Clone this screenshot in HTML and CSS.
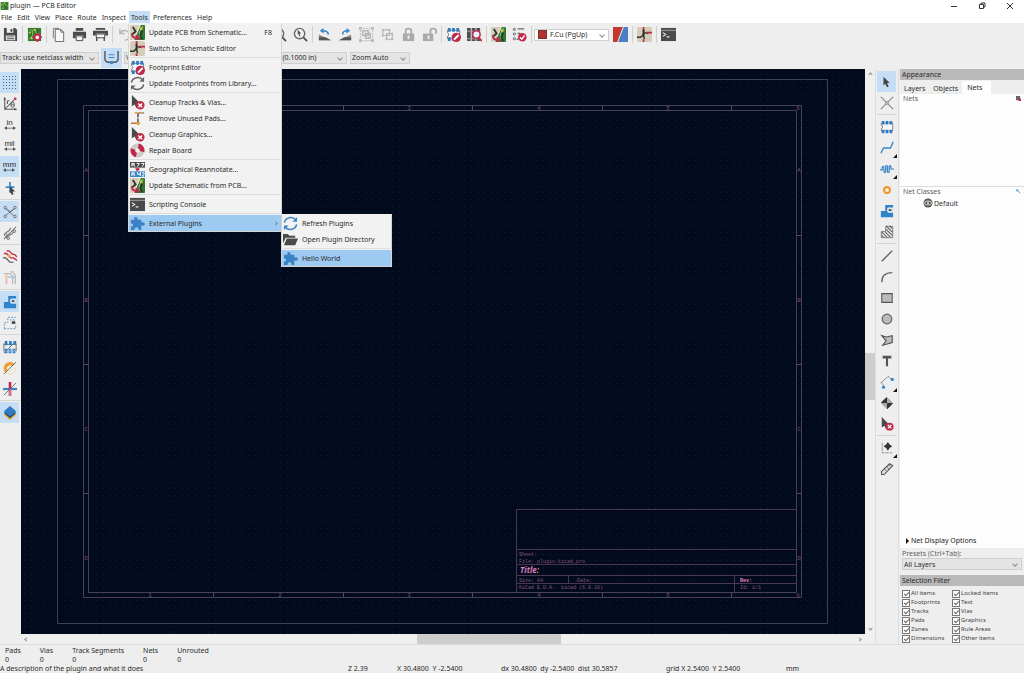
FILE: index.html
```html
<!DOCTYPE html>
<html lang="en">
<head>
<meta charset="utf-8">
<title>plugin — PCB Editor</title>
<link rel="stylesheet" href="styles.css">
</head>
<body>
<svg class="defs" aria-hidden="true">
  <symbol id="save" viewBox="0 0 16 16"><path fill="#4a4a4a" d="M1 1h12l2 2v12H1z"/><path fill="#eee" d="M4 1h7v5H4zM3 9h10v5H3z"/><path fill="#4a4a4a" d="M8 2h2v3H8zM4 10h8v1H4zM4 12h8v1H4z"/></symbol>
  <symbol id="board" viewBox="0 0 16 16"><path fill="#2f7a33" d="M1 1h14v14H1z"/><path stroke="#8bc34a" fill="none" d="M2 13l4-4V3M9 2v4l5 2M4 2v3"/><path fill="#e8c14e" d="M2 5h2v2H2zM7 2h2v2H7zM4 11h2v2H4z"/></symbol>
  <symbol id="setup" viewBox="0 0 16 16"><use href="#board"/><circle cx="11" cy="11" r="3" fill="#eee" stroke="#c0294a" stroke-width="2"/><path stroke="#c0294a" stroke-width="1.5" d="M11 6v2M11 14v2M6 11h2M14 11h2M8 8l1 1M13 13l1 1M14 8l-1 1M8 14l1-1"/></symbol>
  <symbol id="page" viewBox="0 0 16 16"><path fill="#e8e8e8" stroke="#777" d="M2.500 3V1.500h6M2.500 3v9"/><path fill="#f8f8f8" stroke="#666" d="M4.500 2.500h6l3 3v10h-9zM10.500 2.500v3h3"/></symbol>
  <symbol id="print" viewBox="0 0 16 16"><path fill="#4a4a4a" d="M4 1h8v3H4zM1 5h14v7h-3V9H4v3H1z"/><path fill="#f4f4f4" stroke="#4a4a4a" d="M4.500 9.500h7v5h-7z"/></symbol>
  <symbol id="plot" viewBox="0 0 16 16"><path fill="#4a4a4a" d="M3 1h10v2H3zM0 4h16v5h-3V7H3v2H0z"/><path fill="#f4f4f4" stroke="#4a4a4a" d="M3.500 7.500h9v4h-9z"/><path stroke="#4a4a4a" stroke-width="1.500" d="M4 11v4M12 11v4"/></symbol>
  <symbol id="undo" viewBox="0 0 16 16"><path fill="none" stroke="#b8b8b8" stroke-width="1.500" d="M3 2v5h5M3 7c3-5 10-4 10 2 0 3-2 5-5 5"/></symbol>
  <symbol id="mag" viewBox="0 0 16 16"><circle cx="7" cy="7" r="5.500" fill="#f4f4f4" stroke="#666" stroke-width="1.500"/><path stroke="#555" stroke-width="2" d="M11 11l4 4"/></symbol>
  <symbol id="magsel" viewBox="0 0 16 16"><use href="#mag"/><path fill="#555" d="M5 3l4 4H7l1 3-1 .5-1-3-1 1z"/></symbol>
  <symbol id="rotl" viewBox="0 0 16 16"><path fill="#8b8b8b" d="M2 8l13 6H2z"/><path fill="#555" d="M2 11h7l6 3H2z"/><path fill="none" stroke="#3c86c8" stroke-width="1.800" d="M12 8c0-3-2-4-6-4"/><path fill="#3c86c8" d="M7 1v6L3 4z"/></symbol>
  <symbol id="rotr" viewBox="0 0 16 16"><path fill="#8b8b8b" d="M14 8L1 14h13z"/><path fill="#555" d="M14 11H7l-6 3h13z"/><path fill="none" stroke="#3c86c8" stroke-width="1.800" d="M5 8c0-3 1-4 5-4"/><path fill="#3c86c8" d="M9 1v6l4-3z"/></symbol>
  <symbol id="group" viewBox="0 0 16 16"><path fill="none" stroke="#b8b8b8" stroke-dasharray="2 1" d="M1.500 1.500h13v13h-13z"/><path fill="#eee" stroke="#b4b4b4" stroke-width="1.500" d="M4 4h6v5H4zM7 7h5v5H7z"/><path fill="#bbb" d="M0 0h3v3H0zM13 0h3v3h-3zM0 13h3v3H0zM13 13h3v3h-3z"/></symbol>
  <symbol id="ungroup" viewBox="0 0 16 16"><path fill="#eee" stroke="#b4b4b4" stroke-width="1.200" d="M3 3h7v6H3zM7 7h6v6H7z"/><path fill="#b4b4b4" d="M2 2h2v2H2zM9 2h2v2H9zM2 8h2v2H2zM12 6h2v2h-2zM6 12h2v2H6zM12 12h2v2h-2z"/></symbol>
  <symbol id="lock" viewBox="0 0 16 16"><path fill="none" stroke="#aaa" stroke-width="2" d="M5 8V4c0-3 6-3 6 0v4"/><path fill="#aaa" d="M2 7h12v8H2z"/><path fill="#eee" d="M7 9h2v4H7z"/></symbol>
  <symbol id="unlock" viewBox="0 0 16 16"><path fill="none" stroke="#aaa" stroke-width="2" d="M9 8V4c0-3 6-3 6 0v3"/><path fill="#aaa" d="M1 7h11v8H1z"/><path fill="#eee" d="M6 9h2v4H6z"/></symbol>
  <symbol id="fp" viewBox="0 0 16 16"><path fill="#f8f8f8" stroke="#777" d="M1.500 3.500h13v9h-13V10c2 0 2-4 0-4z"/><path fill="#2f7cc4" d="M2 1h3v4H2zM6.500 1h3v4h-3zM11 1h3v4h-3zM2 11h3v4H2zM6.500 11h3v4h-3zM11 11h3v4h-3z"/></symbol>
  <symbol id="fpedit" viewBox="0 0 16 16"><use href="#fp"/><circle cx="11" cy="11" r="5" fill="#c0294a"/><path stroke="#fff" stroke-width="2" d="M8.500 13.500l5-5"/></symbol>
  <symbol id="lib" viewBox="0 0 16 16"><path fill="#4f4f4f" d="M0 1h4v14H0zM5 1h4v14H5zM10 1h4v14h-4z"/><path stroke="#aaa" d="M0 4.500h14M0 12.500h14"/><circle cx="10" cy="8" r="4" fill="#e4eef8" stroke="#c0294a" stroke-width="1.600"/><path stroke="#c0294a" stroke-width="2" d="M12 11l4 4"/></symbol>
  <symbol id="sch" viewBox="0 0 16 16"><rect width="16" height="16" rx="2" fill="#d4cdb8"/><path stroke="#333" stroke-width="1.500" fill="none" d="M7 3v8M0 11h4l4-4M8 6l4 1M7 9l1 4"/><path stroke="#c0294a" stroke-width="1.800" d="M10 6h6M7 0v4M7 13v3"/><path fill="#333" d="M6 3h2v6H6z"/></symbol>
  <symbol id="sync" viewBox="0 0 16 16"><rect width="16" height="16" rx="1" fill="#2f7a33"/><path fill="#d4cdb8" d="M0 0h11L4 16H0z"/><path stroke="#9fd35a" fill="none" d="M14 1l-4 6v6"/><path stroke="#fff" stroke-width="1" fill="none" d="M11 0L4 16"/><path stroke="#333" stroke-width="2" fill="none" d="M3 2l3 5-4 3M13 6l-2 5 2 4"/><path stroke="#c0294a" stroke-width="2" fill="none" d="M2 9c0 4 2 5 6 5M6 11l3 3-2 2"/><circle cx="12" cy="4" r="1.500" fill="#e8c14e"/></symbol>
  <symbol id="drc" viewBox="0 0 16 16"><path fill="none" stroke="#777" d="M1.500 1.500h2v2h-2zM1.500 6.500h2v2h-2zM1.500 11.500h2v2h-2z"/><path stroke="#666" stroke-width="1.500" d="M6 2h7M6 7h3M5 13h2"/><circle cx="11" cy="11" r="4.500" fill="#c0294a"/><path fill="none" stroke="#fff" stroke-width="1.500" d="M8.500 11l2 2 3-4"/></symbol>
  <symbol id="pair" viewBox="0 0 16 16"><path fill="#c4382f" d="M0 0h11L5 16H0z"/><path fill="#4d7fc4" d="M11 0h5v16H5z"/><path stroke="#eee" d="M11 0L5 16"/></symbol>
  <symbol id="term" viewBox="0 0 16 16"><path fill="#4a4a4a" d="M0 1h16v14H0z"/><path stroke="#aaa" d="M0 3.500h16"/><path stroke="#eee" stroke-width="1.200" fill="none" d="M2 6l3 2-3 2M6 10.500h3"/></symbol>
  <symbol id="refresh" viewBox="0 0 16 16"><path fill="none" stroke="currentColor" stroke-width="1.600" d="M1.500 7c1-6 9-7 12-3M14.500 9c-1 6-9 7-12 3"/><path fill="currentColor" d="M15 1v5h-5zM1 15v-5h5z"/></symbol>
  <symbol id="cursorx" viewBox="0 0 16 16"><path fill="#4a4a4a" d="M2 0l9 9H7l2 4-2 1-2-4-3 2z"/><circle cx="11" cy="11" r="4.500" fill="#c0294a"/><path stroke="#fff" stroke-width="1.500" d="M9 9l4 4M13 9l-4 4"/></symbol>
  <symbol id="unpad" viewBox="0 0 16 16"><path stroke="#4d7fc4" stroke-width="1.500" d="M9 2h6"/><path stroke="#c0603f" stroke-width="1.500" d="M1 13h7"/><path stroke="#444" stroke-width="1.500" stroke-dasharray="5 1" d="M8.500 2v13"/><path fill="#f2a33a" d="M5 1h4v2H5zM11 1h3v2h-3zM6 12h5v2H6z"/></symbol>
  <symbol id="ring" viewBox="0 0 16 16"><circle cx="8" cy="8" r="5" fill="none" stroke="#ccc" stroke-width="5"/><circle cx="8" cy="8" r="5" fill="none" stroke="#c0294a" stroke-width="5" stroke-dasharray="8 7.700" transform="rotate(-80 8 8)"/></symbol>
  <symbol id="reann" viewBox="0 0 16 16"><path fill="#4a4a4a" d="M0 0h16v6H0z"/><path fill="#3c86c8" d="M0 10h16v6H0z"/><path stroke="#fff" fill="none" d="M2 5V1.500h2.500V3H2M4 3l1 2M7 1.500h3L8 5M12 1.500h3L13 5M2 15v-3.500h2.500V13H2M4 13l1 2M8 11v2h3v-2M11 11v4M13 11.500h2V13l-2 2h2"/><path stroke="#c0294a" stroke-width="1.500" fill="none" d="M8 6v3M6 7l2 2 2-2"/></symbol>
  <symbol id="puzzle" viewBox="0 0 16 16"><path fill="#3a82c4" d="M1 4h4C3 0 9 0 8 4h4v3c5-2 5 5 0 3v5H9c1-4-5-4-4 0H1v-4c3 1 3-4 0-3z"/></symbol>
  <symbol id="folder" viewBox="0 0 16 16"><path fill="#4a4a4a" d="M0 2h5l2 2h6v2H3L0 12zM4 7h12l-3 7H1z"/></symbol>
  <symbol id="uwidth" viewBox="0 0 16 16"><path fill="none" stroke="#555" stroke-width="1.500" d="M1 1v8c0 2 1 4 4 4h6c3 0 4-2 4-4V1"/><path stroke="#3c86c8" stroke-width="1.200" d="M5 5h6M5 8h6"/><circle cx="8" cy="13.500" r="1.800" fill="#3c86c8"/></symbol>
  <symbol id="grid" viewBox="0 0 14 14"><path stroke="#4a6384" stroke-width="1" stroke-dasharray="1 2" d="M0 .5h14M0 3.500h14M0 6.500h14M0 9.500h14M0 12.500h14"/></symbol>
  <symbol id="polar" viewBox="0 0 16 16"><path fill="none" stroke="#555" stroke-width="1.200" d="M2 1v13h13M1 3l1-2 1 2M13 13l2 1-2 1M2 14L13 3M5 4v4M5 5l2-1"/><circle cx="14" cy="2" r="1.500" fill="#c0294a"/><ellipse cx="11" cy="9" rx="2" ry="3" fill="none" stroke="#555"/><path stroke="#555" d="M9 9h4"/></symbol>
  <symbol id="arrows" viewBox="0 0 16 5"><path fill="#555" d="M0 2.500L4 0v2h8V0l4 2.500L12 5V3H4v2z"/></symbol>
  <symbol id="cross" viewBox="0 0 16 16"><path stroke="#3c86c8" stroke-width="2" d="M8 1v12M3 7h10"/><path fill="#444" d="M8 6l6 6h-3l1 3-2 1-1-3-1 1z"/></symbol>
  <symbol id="rats" viewBox="0 0 16 16"><path stroke="#666" fill="none" d="M2 3l12 11M14 3L2 13M2 3l7 5 5-5"/><g fill="#ddd" stroke="#666"><circle cx="2.500" cy="3" r="1.500"/><circle cx="13.500" cy="3" r="1.500"/><circle cx="2.500" cy="13" r="1.500"/><circle cx="13.500" cy="13" r="1.500"/></g></symbol>
  <symbol id="curv" viewBox="0 0 16 16"><path stroke="#777" stroke-width="1.200" fill="none" d="M2 10c0-4 5-2 7-8M4 14c1-5 7-2 9-9M1 15L15 1"/><g fill="#ddd" stroke="#666"><circle cx="3" cy="10" r="1.500"/><circle cx="13" cy="6" r="1.500"/><circle cx="6" cy="14" r="1.500"/></g></symbol>
  <symbol id="tracks" viewBox="0 0 16 16"><path fill="none" stroke="#c0294a" stroke-width="1.600" d="M4 1h3l4 4h2l3 3M1 4h3l5 5h3l4 3"/><path fill="none" stroke="#555" stroke-width="1.400" d="M0 9h3l5 5h4"/><circle cx="7" cy="7" r="1.800" fill="#f2a33a"/></symbol>
  <symbol id="netc" viewBox="0 0 16 16"><path fill="none" stroke="#bbb" stroke-width="1.500" d="M1 3h7l3 3v9M8 1h3l3 4v10"/><path stroke="#9cc3e4" stroke-width="1.500" d="M3 7h12"/><path stroke="#ecb5bd" stroke-width="2" d="M4 8v7"/><circle cx="4" cy="6" r="2" fill="#f3d09a"/></symbol>
  <symbol id="zone" viewBox="0 0 16 16"><path fill="#2f84cc" d="M1 8h5V1h9v3H9v6h6v5H1z"/><path fill="#d9e6f2" d="M8 5h7v4H8z"/><path fill="#444" d="M10 6h3v2h-3z"/></symbol>
  <symbol id="zoneo" viewBox="0 0 16 16"><path fill="none" stroke="#4d8cc4" stroke-dasharray="2 1.500" d="M1.500 14.500V7.500h4V1.500h9M1.500 14.500h13v-5M8 4.500h7"/><path fill="#444" d="M10 6h4v3h-4z"/></symbol>
  <symbol id="padsk" viewBox="0 0 16 16"><path fill="none" stroke="#666" d="M1 4v9M15 4v9M1 15L15 1M1 5h14"/><path fill="#2f7cc4" d="M2 1h3v5H2zM7 1h3v5H7zM12 1h3v4h-3z"/><path fill="none" stroke="#2f7cc4" stroke-width="1.200" d="M2.500 10.500h2v4h-2zM7 10.500h2v4H7zM11.500 10.500h2v4h-2z"/></symbol>
  <symbol id="viask" viewBox="0 0 16 16"><path fill="none" stroke="#f0a030" stroke-width="4" d="M4 12a5 5 0 0 1 8-7"/><path fill="none" stroke="#ecd6ac" d="M14 7a6 6 0 0 1-9 7M10 8a3 3 0 0 1-2 3"/><path stroke="#666" d="M1 15L15 1"/></symbol>
  <symbol id="trsk" viewBox="0 0 16 16"><path stroke="#3c86c8" stroke-width="2.500" d="M0 8h16"/><path stroke="#c0294a" stroke-width="3" d="M8 0v16"/><path stroke="#ddd" d="M8 8v8"/><path stroke="#666" d="M1 15L15 1"/></symbol>
  <symbol id="layers" viewBox="0 0 16 16"><path fill="#f0a030" d="M1 10l7-6 7 6-7 6z"/><path fill="#174f85" d="M1 8l7-6 7 6-7 6z"/><path fill="#2f7cc4" d="M1 6l7-6 7 6-7 6z"/></symbol>
  <symbol id="arrow" viewBox="0 0 16 16"><path fill="#444" d="M4 2l7 7H8l2 4-2 1-2-4-2 2z"/></symbol>
  <symbol id="hl" viewBox="0 0 16 16"><path stroke="#888" stroke-width="1.300" d="M1 1l14 14M15 1L1 15"/><circle cx="8" cy="8" r="1.500" fill="#ddd" stroke="#888"/></symbol>
  <symbol id="route" viewBox="0 0 16 16"><path fill="none" stroke="#3c86c8" stroke-width="1.500" d="M1 14l3-6h8l3-7"/></symbol>
  <symbol id="tune" viewBox="0 0 16 16"><path fill="none" stroke="#3c86c8" stroke-width="1.400" d="M0 9h2.500V6q1-2 2 0v5q1 2 2 0V5q1-2 2 0v6q1 2 2 0V5q1-2 2 0v3H16"/></symbol>
  <symbol id="via" viewBox="0 0 16 16"><circle cx="8" cy="8" r="3.400" fill="#fff" stroke="#ee9a2f" stroke-width="2.600"/></symbol>
  <symbol id="hatch" viewBox="0 0 16 16"><path fill="#e6e6e6" stroke="#777" d="M1.500 7.500h5v-6h8v13h-13z"/><path stroke="#555" stroke-width="1.200" d="M2 8l6 6M2 12l2 2M6 8l6 6M7 5l7 7M7 1l7 7M11 1l3 3"/></symbol>
  <symbol id="line" viewBox="0 0 16 16"><path stroke="#666" stroke-width="1.600" d="M2 14L14 2"/></symbol>
  <symbol id="arc" viewBox="0 0 16 16"><path fill="none" stroke="#666" stroke-width="1.500" d="M2 14C2 7 6 3 14 3"/></symbol>
  <symbol id="rect" viewBox="0 0 16 16"><path fill="#bbb" stroke="#555" stroke-width="1.200" d="M2 3h12v10H2z"/></symbol>
  <symbol id="circ" viewBox="0 0 16 16"><circle cx="8" cy="8" r="5.500" fill="#bbb" stroke="#666" stroke-width="1.400"/></symbol>
  <symbol id="poly" viewBox="0 0 16 16"><path fill="#bbb" stroke="#555" stroke-width="1.300" d="M2 3l5 1.500L14 3v8L3 14l4-5z"/></symbol>
  <symbol id="txt" viewBox="0 0 16 16"><path fill="#555" d="M3 2h10v3H9.200v9H6.800V5H3z"/></symbol>
  <symbol id="dim" viewBox="0 0 16 16"><path fill="none" stroke="#888" d="M1 9l8-7M1 8l4 5M9 1l4 4"/><circle cx="4" cy="14" r="1.800" fill="#2f84cc"/><circle cx="14" cy="5" r="1.800" fill="#2f84cc"/></symbol>
  <symbol id="target" viewBox="0 0 16 16"><path fill="#aaa" d="M8 1l7 7-7 7-7-7z"/><circle cx="8" cy="8" r="5" fill="#aaa"/><path fill="#333" d="M8 1v7H1l3-3.500zM8 15V8h7l-3 3.500z"/></symbol>
  <symbol id="origin" viewBox="0 0 16 16"><path fill="none" stroke="#888" d="M2.500 2v11.500H14" stroke-dasharray="4 1"/><path fill="#333" d="M9 1l2 3 3 2-3 2-2 3-2-3-3-2 3-2z"/></symbol>
  <symbol id="ruler" viewBox="0 0 16 16"><path fill="#ddd" stroke="#555" stroke-width="1.200" d="M1.500 11L11 2l3.500 2L5 14l-3 .5z"/><path stroke="#555" d="M5 8l2 2M8 6l2 2M10 3l2 2"/></symbol>
</svg>

<header class="titlebar">
  <svg class="appicon"><use href="#board"/></svg>
  <h1>plugin — PCB Editor</h1>
  <div class="winbtns">
    <button aria-label="Minimize"><svg viewBox="0 0 8 8"><path d="M1 4.500h6"/></svg></button>
    <button aria-label="Restore"><svg viewBox="0 0 8 8"><path d="M1.500 2.500h4v4h-4zM3 2V1h4v4H6"/></svg></button>
    <button aria-label="Close"><svg viewBox="0 0 8 8"><path d="M1 1l6 6M7 1L1 7"/></svg></button>
  </div>
</header>

<nav class="menubar">
  <button>File</button><button>Edit</button><button>View</button><button>Place</button><button>Route</button><button>Inspect</button>
  <div class="menuhost">
    <button class="open">Tools</button>
    <div class="menu tools">
      <button><svg><use href="#sync"/></svg>Update PCB from Schematic...<kbd>F8</kbd></button>
      <button><svg><use href="#sch"/></svg>Switch to Schematic Editor</button>
      <hr>
      <button><svg><use href="#fpedit"/></svg>Footprint Editor</button>
      <button><svg><use href="#refresh"/></svg>Update Footprints from Library...</button>
      <hr>
      <button><svg><use href="#cursorx"/></svg>Cleanup Tracks &amp; Vias...</button>
      <button><svg><use href="#unpad"/></svg>Remove Unused Pads...</button>
      <button><svg><use href="#cursorx"/></svg>Cleanup Graphics...</button>
      <button><svg><use href="#ring"/></svg>Repair Board</button>
      <hr>
      <button><svg><use href="#reann"/></svg>Geographical Reannotate...</button>
      <button><svg><use href="#sync"/></svg>Update Schematic from PCB...</button>
      <hr>
      <button><svg><use href="#term"/></svg>Scripting Console</button>
      <hr>
      <div class="subhost">
        <button class="hot"><svg><use href="#puzzle"/></svg>External Plugins<i class="chev right"></i></button>
        <div class="menu sub">
          <button><svg class="blue"><use href="#refresh"/></svg>Refresh Plugins</button>
          <button><svg><use href="#folder"/></svg>Open Plugin Directory</button>
          <hr>
          <button class="hot"><svg><use href="#puzzle"/></svg>Hello World</button>
        </div>
      </div>
    </div>
  </div>
  <button>Preferences</button><button>Help</button>
</nav>

<div class="toolbar">
  <button aria-label="Save"><svg><use href="#save"/></svg></button><span class="vsep"></span>
  <button aria-label="Board setup"><svg><use href="#setup"/></svg></button><span class="vsep"></span>
  <button aria-label="Page settings"><svg><use href="#page"/></svg></button>
  <button aria-label="Print"><svg><use href="#print"/></svg></button>
  <button aria-label="Plot"><svg><use href="#plot"/></svg></button><span class="vsep"></span>
  <button aria-label="Undo"><svg><use href="#undo"/></svg></button>
  <span class="covered"></span>
  <button aria-label="Zoom to fit"><svg><use href="#mag"/></svg></button>
  <button aria-label="Zoom to selection"><svg><use href="#magsel"/></svg></button><span class="vsep"></span>
  <button aria-label="Rotate left"><svg><use href="#rotl"/></svg></button>
  <button aria-label="Rotate right"><svg><use href="#rotr"/></svg></button>
  <button aria-label="Group"><svg><use href="#group"/></svg></button>
  <button aria-label="Ungroup"><svg><use href="#ungroup"/></svg></button>
  <button aria-label="Lock"><svg><use href="#lock"/></svg></button>
  <button aria-label="Unlock"><svg><use href="#unlock"/></svg></button><span class="vsep"></span>
  <button aria-label="Footprint editor"><svg><use href="#fpedit"/></svg></button>
  <button aria-label="Footprint browser"><svg><use href="#lib"/></svg></button><span class="vsep"></span>
  <button aria-label="Update PCB"><svg><use href="#sync"/></svg></button>
  <button aria-label="Design rules check"><svg><use href="#drc"/></svg></button><span class="vsep"></span>
  <span class="combo layer"><i class="swatch"></i><select aria-label="Active layer"><option>F.Cu (PgUp)</option></select></span>
  <button aria-label="Layer pair"><svg><use href="#pair"/></svg></button><span class="vsep"></span>
  <button aria-label="Schematic editor"><svg><use href="#sch"/></svg></button><span class="vsep"></span>
  <button aria-label="Scripting console"><svg><use href="#term"/></svg></button>
</div>

<div class="toolbar second">
  <span class="combo track"><select aria-label="Track width"><option>Track: use netclass width</option></select></span>
  <button class="on" aria-label="Auto track width"><svg><use href="#uwidth"/></svg></button>
  <span class="combo viasize"><select aria-label="Via size"><option>Via: use netclass sizes</option></select></span>
  <span class="combo gridsize"><select aria-label="Grid"><option>Grid: 2.5400 mm (0.1000 in)</option></select></span>
  <span class="combo zoom"><select aria-label="Zoom"><option>Zoom Auto</option></select></span>
</div>

<main>
  <aside class="rail">
    <button class="on" aria-label="Show grid"><svg><use href="#grid"/></svg></button>
    <button aria-label="Polar coordinates"><svg><use href="#polar"/></svg></button>
    <button class="unit">in<svg><use href="#arrows"/></svg></button>
    <button class="unit">mil<svg><use href="#arrows"/></svg></button>
    <button class="unit on">mm<svg><use href="#arrows"/></svg></button>
    <button aria-label="Full crosshair"><svg><use href="#cross"/></svg></button><hr>
    <button class="on" aria-label="Show ratsnest"><svg><use href="#rats"/></svg></button>
    <button aria-label="Curved ratsnest"><svg><use href="#curv"/></svg></button><hr>
    <button aria-label="Dim inactive layers"><svg><use href="#tracks"/></svg></button>
    <button aria-label="Net highlight"><svg><use href="#netc"/></svg></button><hr>
    <button class="on" aria-label="Filled zones"><svg><use href="#zone"/></svg></button>
    <button aria-label="Zone outlines"><svg><use href="#zoneo"/></svg></button><hr>
    <button aria-label="Sketch pads"><svg><use href="#padsk"/></svg></button>
    <button aria-label="Sketch vias"><svg><use href="#viask"/></svg></button>
    <button aria-label="Sketch tracks"><svg><use href="#trsk"/></svg></button><hr>
    <button class="on" aria-label="Appearance manager"><svg><use href="#layers"/></svg></button>
  </aside>

  <section class="board">
    <svg class="sheet" viewBox="21 69 844 565">
      <defs>
        <pattern id="dots" x="24" y="71" width="46" height="46" patternUnits="userSpaceOnUse">
          <path stroke="#151a30" stroke-dasharray="1 6 1 5 1 6 1 5 1 6 1 6 1 5" d="M0 3.500h46M0 10.500h46M0 16.500h46M0 23.500h46M0 29.500h46M0 36.500h46M0 43.500h46"/>
        </pattern>
      </defs>
      <rect x="21" y="69" width="844" height="565" fill="url(#dots)"/>
      <g fill="none" stroke="#413f58">
        <path d="M57.500 79.500h770v544h-770z"/>
        <path stroke="#484059" d="M83.500 105.500h718v492h-718zM88.500 110.500h708v482h-708z"/>
        <path stroke="#5a4462" d="M213.500 105v5M343.500 105v5M472.500 105v5M602.500 105v5M731.500 105v5M213.500 592v5M343.500 592v5M472.500 592v5M602.500 592v5M731.500 592v5M83 235.500h5M83 364.500h5M83 493.500h5M797 235.500h5M797 364.500h5M797 493.500h5"/>
        <path stroke="#4b3654" d="M516.500 592V509.500h280M516.500 549.500h280M516.500 564.500h280M516.500 575.500h280M516.500 583.500h280M568.500 575v8M734.500 575v17"/>
      </g>
      <g class="ref">
        <text x="409" y="110">3</text><text x="539" y="110">4</text><text x="668" y="110">5</text><text x="798" y="110">6</text>
        <text x="150" y="597">1</text><text x="280" y="597">2</text><text x="409" y="597">3</text><text x="539" y="597">4</text><text x="668" y="597">5</text><text x="798" y="597">6</text>
        <text x="86" y="172">A</text><text x="86" y="302">B</text><text x="86" y="431">C</text><text x="86" y="560">D</text>
        <text x="799" y="172">A</text><text x="799" y="302">B</text><text x="799" y="431">C</text><text x="799" y="560">D</text>
      </g>
      <g class="block">
        <text x="519" y="556">Sheet:</text>
        <text x="519" y="563">File: plugin.kicad_pro</text>
        <text x="520" y="573" class="title">Title:</text>
        <text x="519" y="582">Size: A4</text><text x="577" y="582">Date:</text>
        <text x="740" y="582" class="rev">Rev:</text>
        <text x="519" y="589">KiCad E.D.A.&#160; kicad (6.0.10)</text><text x="740" y="589">Id: 1/1</text>
      </g>
    </svg>
    <div class="vscroll"><i class="chev up"></i><div class="thumb"></div><i class="chev"></i></div>
    <div class="hscroll"><i class="chev left"></i><div class="thumb"></div><i class="chev right"></i></div>
  </section>

  <aside class="rail right">
    <button class="on" aria-label="Select"><svg><use href="#arrow"/></svg></button>
    <button aria-label="Local ratsnest"><svg><use href="#hl"/></svg></button><hr>
    <button aria-label="Add footprint"><svg><use href="#fp"/></svg></button>
    <button class="more" aria-label="Route track"><svg><use href="#route"/></svg></button>
    <button class="more" aria-label="Tune length"><svg><use href="#tune"/></svg></button>
    <button aria-label="Add via"><svg><use href="#via"/></svg></button>
    <button aria-label="Add zone"><svg><use href="#zone"/></svg></button>
    <button aria-label="Rule area"><svg><use href="#hatch"/></svg></button><hr>
    <button aria-label="Line"><svg><use href="#line"/></svg></button>
    <button aria-label="Arc"><svg><use href="#arc"/></svg></button>
    <button aria-label="Rectangle"><svg><use href="#rect"/></svg></button>
    <button aria-label="Circle"><svg><use href="#circ"/></svg></button>
    <button aria-label="Polygon"><svg><use href="#poly"/></svg></button>
    <button aria-label="Text"><svg><use href="#txt"/></svg></button>
    <button class="more" aria-label="Dimension"><svg><use href="#dim"/></svg></button>
    <button aria-label="Alignment target"><svg><use href="#target"/></svg></button>
    <button aria-label="Delete"><svg><use href="#cursorx"/></svg></button><hr>
    <button class="more" aria-label="Set origin"><svg><use href="#origin"/></svg></button>
    <button aria-label="Measure"><svg><use href="#ruler"/></svg></button>
  </aside>

  <aside class="panel">
    <h2>Appearance</h2>
    <div class="tabs"><button>Layers</button><button>Objects</button><button class="active">Nets</button></div>
    <div class="nets"><span>Nets</span><svg viewBox="0 0 6 6"><path fill="#666" d="M0 0h5v5H0z"/><path fill="#c0294a" d="M3 3h3v3H3z"/></svg></div>
    <div class="classes">
      <div class="caption"><span>Net Classes</span><svg viewBox="0 0 6 6"><path fill="none" stroke="#3c86c8" d="M1 1l4 4M1 3V1h2"/></svg></div>
      <div class="netclass"><svg viewBox="0 0 10 10"><circle cx="5" cy="5" r="4.500" fill="#555"/><ellipse cx="5" cy="5" rx="3.500" ry="2" fill="none" stroke="#ddd"/><circle cx="5" cy="5" r="1" fill="#ddd"/></svg>Default</div>
      <button class="expander">Net Display Options</button>
    </div>
    <div class="presets">
      <label for="preset">Presets (Ctrl+Tab):</label>
      <span class="combo"><select id="preset"><option>All Layers</option></select></span>
    </div>
    <h2>Selection Filter</h2>
    <div class="filter">
      <label><input type="checkbox" checked>All items</label><label><input type="checkbox" checked>Locked items</label>
      <label><input type="checkbox" checked>Footprints</label><label><input type="checkbox" checked>Text</label>
      <label><input type="checkbox" checked>Tracks</label><label><input type="checkbox" checked>Vias</label>
      <label><input type="checkbox" checked>Pads</label><label><input type="checkbox" checked>Graphics</label>
      <label><input type="checkbox" checked>Zones</label><label><input type="checkbox" checked>Rule Areas</label>
      <label><input type="checkbox" checked>Dimensions</label><label><input type="checkbox" checked>Other items</label>
    </div>
  </aside>
</main>

<dl class="counts">
  <div><dt>Pads</dt><dd>0</dd></div>
  <div><dt>Vias</dt><dd>0</dd></div>
  <div><dt>Track Segments</dt><dd>0</dd></div>
  <div><dt>Nets</dt><dd>0</dd></div>
  <div><dt>Unrouted</dt><dd>0</dd></div>
</dl>
<footer class="status">
  <span>A description of the plugin and what it does</span>
  <span>Z 2.39</span>
  <span>X 30.4800&nbsp; Y -2.5400</span>
  <span>dx 30.4800&nbsp; dy -2.5400&nbsp; dist 30.5857</span>
  <span>grid X 2.5400&nbsp; Y 2.5400</span>
  <span>mm</span>
</footer>
</body>
</html>
```
FILE: styles.css
```css
* { box-sizing: border-box; }
body {
  margin: 0;
  min-height: 100vh;
  display: flex;
  flex-direction: column;
  overflow: hidden;
  background: #eee;
  color: #2b2b2b;
  font: 7px/9px "Noto Sans", "Open Sans", sans-serif;
}
button {
  border: 0;
  padding: 0;
  background: none;
  color: inherit;
  font: inherit;
  white-space: nowrap;
}
svg { display: block; flex: none; }
.defs { position: absolute; width: 0; height: 0; }

.titlebar {
  display: flex;
  align-items: center;
  height: 11px;
  background: #fff;
}
.appicon { width: 9px; height: 10px; }
.titlebar h1 { flex: 1; margin: 0; padding-left: 1px; font-size: 7px; font-weight: 400; }
.winbtns { display: flex; gap: 20px; padding-right: 10px; }
.winbtns svg { width: 8px; height: 8px; fill: none; stroke: #333; }

.menubar { display: flex; gap: 1px; height: 12px; background: #fff; position: relative; z-index: 5; }
.menubar > button, .menuhost > button { height: 13px; padding: 0 2px; }
.menubar > button:first-child { padding-left: 1px; }
.menuhost { position: relative; }
.menuhost > .open { background: #c5ddf5; }

.menu {
  position: absolute;
  background: #f2f2f2;
  border: 1px solid #d4d4d4;
  border-top-color: #f2f2f2;
}
.menu button {
  display: flex;
  align-items: center;
  gap: 4px;
  width: 100%;
  height: 16px;
  padding-left: 1px;
  text-align: left;
}
.menu svg { width: 15px; height: 15px; color: #666; }
.menu svg.blue { color: #3c86c8; }
.menu .hot { background: #9dcaf0; }
.menu hr { height: 1px; margin: 1px; border: 0; background: #dcdcdc; }
.menu kbd { margin-left: auto; padding-right: 9px; font: inherit; }
.menu .chev { margin-left: auto; margin-right: 4px; }
.tools { top: 12px; left: -1px; width: 154px; }
.subhost { position: relative; }
.sub { top: -1px; left: 152px; width: 111px; }

.chev {
  width: 3px;
  height: 3px;
  border: solid #888;
  border-width: 0 1px 1px 0;
  transform: rotate(45deg);
}
.chev.up { transform: rotate(225deg); }
.chev.left { transform: rotate(135deg); }
.chev.right { transform: rotate(-45deg); }

.toolbar { display: flex; align-items: center; height: 23px; }
.toolbar button { display: grid; place-items: center; width: 21px; height: 20px; flex: none; }
.toolbar svg { width: 15px; height: 15px; }
.vsep { width: 1px; height: 17px; margin: 0 1px; background: #d0d0d0; flex: none; }
.covered { width: 134px; }
.toolbar .on, .rail .on { background: #c5ddf5; }

.combo {
  position: relative;
  display: flex;
  align-items: center;
  height: 12px;
  background: #e4e4e4;
  border: 1px solid #cfcfcf;
}
.combo select {
  appearance: none;
  width: 100%;
  border: 0;
  padding: 0 1px;
  background: none;
  color: inherit;
  font: inherit;
}
.combo::after {
  content: "";
  position: absolute;
  right: 4px;
  top: 3px;
  width: 3px;
  height: 3px;
  border: solid #888;
  border-width: 0 1px 1px 0;
  transform: rotate(45deg);
}
.layer { width: 75px; margin: 0 1px; padding-left: 3px; gap: 2px; background: #fff; }
.swatch { width: 9px; height: 9px; background: #b4322c; border: 1px solid #733; flex: none; }
.track { width: 99px; margin-right: 2px; }
.viasize { width: 84px; margin-left: 2px; }
.gridsize { width: 137px; margin-left: 2px; }
.gridsize select { padding-left: 15px; }
.zoom { width: 60px; margin-left: 3px; }

main { flex: 1; display: flex; min-height: 0; }
.rail { width: 21px; padding-top: 3px; }
.rail button {
  display: grid;
  place-items: center;
  width: 19px;
  height: 21px;
  position: relative;
}
.rail svg { width: 14px; height: 14px; }
.rail hr { height: 1px; margin: 1px 0; border: 0; background: #d6d6d6; }
.rail .unit { place-content: center; font: 8px/7px "Liberation Sans", sans-serif; }
.rail .unit svg { width: 12px; height: 4px; }
.rail.right { width: 24px; padding: 2px 2px 0 1px; border: solid #ddd; border-width: 0 1px; }
.right .more::after {
  content: "";
  position: absolute;
  right: -1px;
  bottom: 0;
  border: 2px solid;
  border-color: transparent #111 #111 transparent;
}

.board {
  flex: 1;
  min-width: 0;
  display: grid;
  grid-template: minmax(0, 1fr) 10px / minmax(0, 1fr) 10px;
  background: #f0f0f0;
}
.sheet { width: 100%; height: 100%; background: #020a1e; }
.sheet text { font-family: "Liberation Mono", monospace; }
.ref { fill: #7a4a74; font-size: 6px; text-anchor: middle; }
.block { fill: #835480; font-size: 5px; }
.block .title { fill: #d880b4; font: italic 700 8px "Noto Sans", sans-serif; }
.block .rev { fill: #e088bc; font-weight: 700; }
.vscroll, .hscroll { display: flex; align-items: center; justify-content: space-between; }
.vscroll { flex-direction: column; padding: 4px 0; }
.hscroll { padding: 0 4px; }
.thumb { background: #cdcdcd; }
.vscroll .thumb { width: 10px; height: 47px; margin-top: 50px; }
.hscroll .thumb { width: 144px; height: 10px; margin-left: 92px; }

.panel { width: 125px; display: flex; flex-direction: column; padding-left: 1px; }
.panel h2 { margin: 0; padding-left: 2px; background: #b9b9b9; font-size: 7px; line-height: 11px; font-weight: 400; }
.tabs { display: flex; align-items: end; height: 14px; }
.tabs button { padding: 0 4px; height: 12px; }
.tabs .active { height: 13px; padding: 0 9px 0 5px; background: #fdfdfd; }
.nets, .classes { background: #fdfdfd; padding: 0 3px; color: #555; }
.nets, .caption, .presets label { font: 7px/9px "Open Sans", sans-serif; color: #555; }
.nets { display: flex; justify-content: space-between; height: 92px; }
.nets svg, .caption svg { width: 5px; height: 5px; margin: 2px 0; }
.classes { flex: 1; display: flex; flex-direction: column; border-top: 1px solid #ddd; }
.caption { display: flex; justify-content: space-between; }
.netclass { display: flex; align-items: center; gap: 1px; padding: 2px 0 0 20px; color: #333; }
.netclass svg { width: 10px; height: 10px; }
.expander { display: flex; align-items: center; gap: 2px; margin-top: auto; padding: 0 0 3px 3px; color: #222; }
.expander::before { content: ""; border: solid transparent; border-width: 3px 0 3px 3px; border-left-color: #111; }
.presets { padding: 1px 2px 5px; }
.presets label { display: block; }
.filter { display: grid; grid-template-columns: 50px 1fr; padding: 3px 2px 1px; color: #444; font-size: 6px; }
.filter label { display: flex; align-items: center; gap: 1px; height: 9px; }
.filter input {
  appearance: none;
  width: 8px;
  height: 8px;
  margin: 0;
  border: 1px solid #777;
  background: #fff;
  display: grid;
  place-items: center;
}
.filter input:checked::before {
  content: "";
  width: 2px;
  height: 4px;
  border: solid #666;
  border-width: 0 1px 1px 0;
  transform: rotate(45deg);
}

.counts { display: flex; gap: 19px; height: 20px; margin: 0; padding: 1px 5px; border-top: 1px solid #ddd; }
.counts dd { margin: 0; }
.status { display: grid; grid-template-columns: 348fr 49fr 104fr 165fr 120fr 238fr; height: 9px; white-space: nowrap; }
```
